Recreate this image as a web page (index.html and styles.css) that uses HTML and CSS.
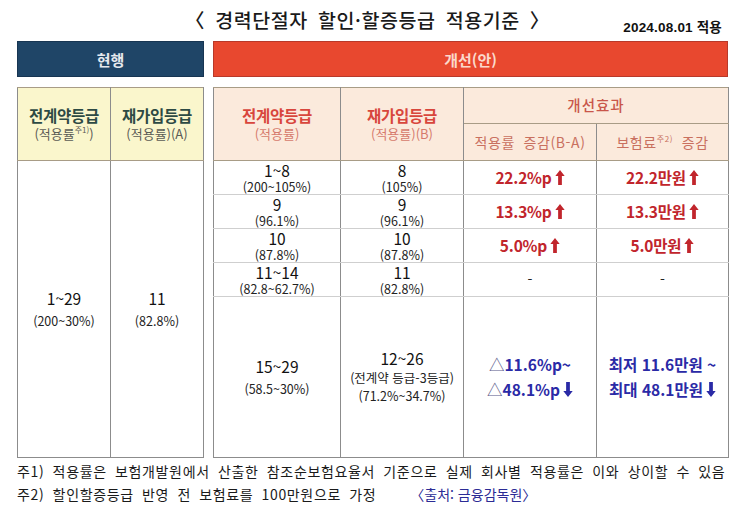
FILE: index.html
```html
<!DOCTYPE html>
<html lang="ko">
<head>
<meta charset="utf-8">
<link rel="stylesheet" href="styles.css">
</head>
<body>
<div class="page">
  <div class="title-row">
    <div></div>
    <h1 class="title">〈 경력단절자 할인·할증등급 적용기준 〉</h1>
    <div class="date">2024.08.01 적용</div>
  </div>

  <div class="bands">
    <div class="band band-now">현행</div>
    <div class="band band-new">개선(안)</div>
  </div>

  <div class="tables">
    <table class="tbl tbl-now">
      <colgroup><col class="c-half"><col class="c-half"></colgroup>
      <tr class="h-row">
        <th><div class="hm">전계약등급</div><div class="hs">(적용률<sup>주1)</sup>)</div></th>
        <th><div class="hm">재가입등급</div><div class="hs">(적용률)(A)</div></th>
      </tr>
      <tr class="big-row">
        <td><div class="num">1~29</div><div class="sub sub-gap">(200~30%)</div></td>
        <td><div class="num">11</div><div class="sub sub-gap">(82.8%)</div></td>
      </tr>
    </table>

    <table class="tbl tbl-new">
      <colgroup><col class="c1"><col class="c2"><col class="c3"><col class="c4"></colgroup>
      <tr class="h-top">
        <th rowspan="2"><div class="hm">전계약등급</div><div class="hs">(적용률)</div></th>
        <th rowspan="2"><div class="hm">재가입등급</div><div class="hs">(적용률)(B)</div></th>
        <th colspan="2" class="eff">개선효과</th>
      </tr>
      <tr class="h-bot">
        <th class="eff2">적용률 증감(B-A)</th>
        <th class="eff2">보험료<sup>주2)</sup> 증감</th>
      </tr>
      <tr class="r">
        <td><div class="num">1~8</div><div class="sub">(200~105%)</div></td>
        <td><div class="num">8</div><div class="sub">(105%)</div></td>
        <td class="up">22.2%p<svg class="arr" viewBox="0 0 10 16"><path d="M5 0L10 6.5H7V16H3V6.5H0Z"/></svg></td>
        <td class="up">22.2만원<svg class="arr" viewBox="0 0 10 16"><path d="M5 0L10 6.5H7V16H3V6.5H0Z"/></svg></td>
      </tr>
      <tr class="r">
        <td><div class="num">9</div><div class="sub">(96.1%)</div></td>
        <td><div class="num">9</div><div class="sub">(96.1%)</div></td>
        <td class="up">13.3%p<svg class="arr" viewBox="0 0 10 16"><path d="M5 0L10 6.5H7V16H3V6.5H0Z"/></svg></td>
        <td class="up">13.3만원<svg class="arr" viewBox="0 0 10 16"><path d="M5 0L10 6.5H7V16H3V6.5H0Z"/></svg></td>
      </tr>
      <tr class="r">
        <td><div class="num">10</div><div class="sub">(87.8%)</div></td>
        <td><div class="num">10</div><div class="sub">(87.8%)</div></td>
        <td class="up">5.0%p<svg class="arr" viewBox="0 0 10 16"><path d="M5 0L10 6.5H7V16H3V6.5H0Z"/></svg></td>
        <td class="up">5.0만원<svg class="arr" viewBox="0 0 10 16"><path d="M5 0L10 6.5H7V16H3V6.5H0Z"/></svg></td>
      </tr>
      <tr class="r">
        <td><div class="num">11~14</div><div class="sub">(82.8~62.7%)</div></td>
        <td><div class="num">11</div><div class="sub">(82.8%)</div></td>
        <td class="dash">-</td>
        <td class="dash">-</td>
      </tr>
      <tr class="last">
        <td><div class="num">15~29</div><div class="sub sub-gap">(58.5~30%)</div></td>
        <td><div class="num num-b">12~26</div><div class="sub sub-loose">(전계약 등급-3등급)</div><div class="sub sub-loose">(71.2%~34.7%)</div></td>
        <td class="down"><div><span class="tri">△</span>11.6%p~</div><div><span class="tri">△</span>48.1%p<svg class="arr" viewBox="0 0 10 16"><path d="M5 16L10 9.5H7V0H3V9.5H0Z"/></svg></div></td>
        <td class="down"><div>최저 11.6만원 ~</div><div>최대 48.1만원<svg class="arr" viewBox="0 0 10 16"><path d="M5 16L10 9.5H7V0H3V9.5H0Z"/></svg></div></td>
      </tr>
    </table>
  </div>

  <div class="notes">
    <p class="note">주1) 적용률은 보험개발원에서 산출한 참조순보험요율서 기준으로 실제 회사별 적용률은 이와 상이할 수 있음</p>
    <p class="note">주2) 할인할증등급 반영 전 보험료를 100만원으로 가정<span class="source">〈출처: 금융감독원〉</span></p>
  </div>
</div>
</body>
</html>
```

FILE: styles.css
```css
* { box-sizing: border-box; }
html, body { margin: 0; padding: 0; background: #fff; }
body {
  font-family: "Noto Sans CJK KR", "Noto Sans", sans-serif;
  color: #111;
  width: 730px;
  height: 511px;
  overflow: hidden;
}
.page { padding: 0 2px 0 17px; }

.title-row {
  display: grid;
  grid-template-columns: 1fr auto 1fr;
  align-items: center;
  height: 41px;
}
.title {
  margin: 0 10px 1px 0;
  font-size: 19.5px;
  font-weight: 500;
  color: #1a1a1a;
  letter-spacing: 0.6px;
  word-spacing: 4px;
  line-height: 1;
}
.date {
  justify-self: end;
  margin: 10px 6px 0 0;
  font-size: 13.5px;
  font-weight: 700;
  color: #111;
  letter-spacing: 0.2px;
  font-family: "Liberation Sans", "Noto Sans CJK KR", sans-serif;
}

.bands {
  display: grid;
  grid-template-columns: 187px 515px;
  column-gap: 9px;
  height: 36px;
}
.band {
  display: flex;
  align-items: center;
  justify-content: center;
  font-size: 15px;
  font-weight: 700;
}
.band-now { background: #1f4567; color: #e6e9ee; border: 1px solid #173552; }
.band-new { background: #e8482f; color: #fbd9cc; border: 1px solid #b8392a; }

.tables {
  display: grid;
  grid-template-columns: 187px 515px;
  column-gap: 9px;
  margin-top: 10px;
}
.tbl {
  border-collapse: collapse;
  table-layout: fixed;
  width: 100%;
  height: 371px;
}
.c-half { width: 50%; }
.c1 { width: 127px; }
.c2 { width: 123px; }
.c3 { width: 133px; }
.c4 { width: 132px; }

.tbl th, .tbl td {
  border-left: 1px solid #8c8c8c;
  border-right: 1px solid #8c8c8c;
  text-align: center;
  vertical-align: middle;
  padding: 0;
  line-height: 1.15;
}
.tbl th { font-weight: 400; border-top: 1px solid #a89c86; border-bottom: 1px solid #a89c86; }
.tbl-now th { background: #faf6cc; }
.tbl-new th { background: #fbeadc; }
.tbl tr:last-child td { border-bottom: 1px solid #8c8c8c; }

.h-row { height: 73px; }
.h-top { height: 36px; }
.h-bot { height: 37px; }
.r { height: 34px; }
.tbl .r td { border-bottom: 1px solid #cfcfcf; }

.hm { font-size: 15.5px; font-weight: 700; letter-spacing: -0.3px; line-height: 19px; }
.hs { font-size: 13px; line-height: 17px; }
.tbl-now .hm { color: #2d4a44; }
.tbl-now .hs { color: #5b5b55; }
.tbl-new .hm { color: #d8463c; }
.tbl-new .hs { color: #d67a6c; }
sup { font-size: 8px; line-height: 0; vertical-align: 6px; }
.tbl .eff { font-size: 14.5px; font-weight: 500; color: #c9564a; letter-spacing: 1px; }
.tbl .eff2 { font-size: 14px; color: #c9705f; letter-spacing: 0.6px; word-spacing: 4px; }

.num { font-size: 15.5px; color: #111; line-height: 17px; }
.num-b { margin-bottom: 2px; }
.sub { font-size: 12.5px; color: #222; line-height: 15px; }
.sub-gap { margin-top: 6px; }
.sub-loose { line-height: 18px; }

.tbl .up {
  color: #c1252c;
  font-size: 15.5px;
  font-weight: 700;
  letter-spacing: -0.2px;
}
.tbl .down {
  color: #2a2aa6;
  font-size: 15.5px;
  font-weight: 700;
  line-height: 25px;
}
.tri { font-weight: 400; color: #5a5a8a; }
.arr { width: 10px; height: 15px; margin-left: 3px; vertical-align: -1px; fill: currentColor; }
.tbl .dash { font-size: 14px; color: #222; }

.notes { margin-top: 2px; }
.note {
  margin: 0;
  font-size: 14px;
  line-height: 23px;
  color: #1a1a1a;
  word-spacing: 3.7px;
  letter-spacing: 0.65px;
  white-space: nowrap;
}
.source {
  color: #2b2b95;
  margin-left: 34px;
  font-size: 14px;
  letter-spacing: 0;
  word-spacing: 0;
}
```
